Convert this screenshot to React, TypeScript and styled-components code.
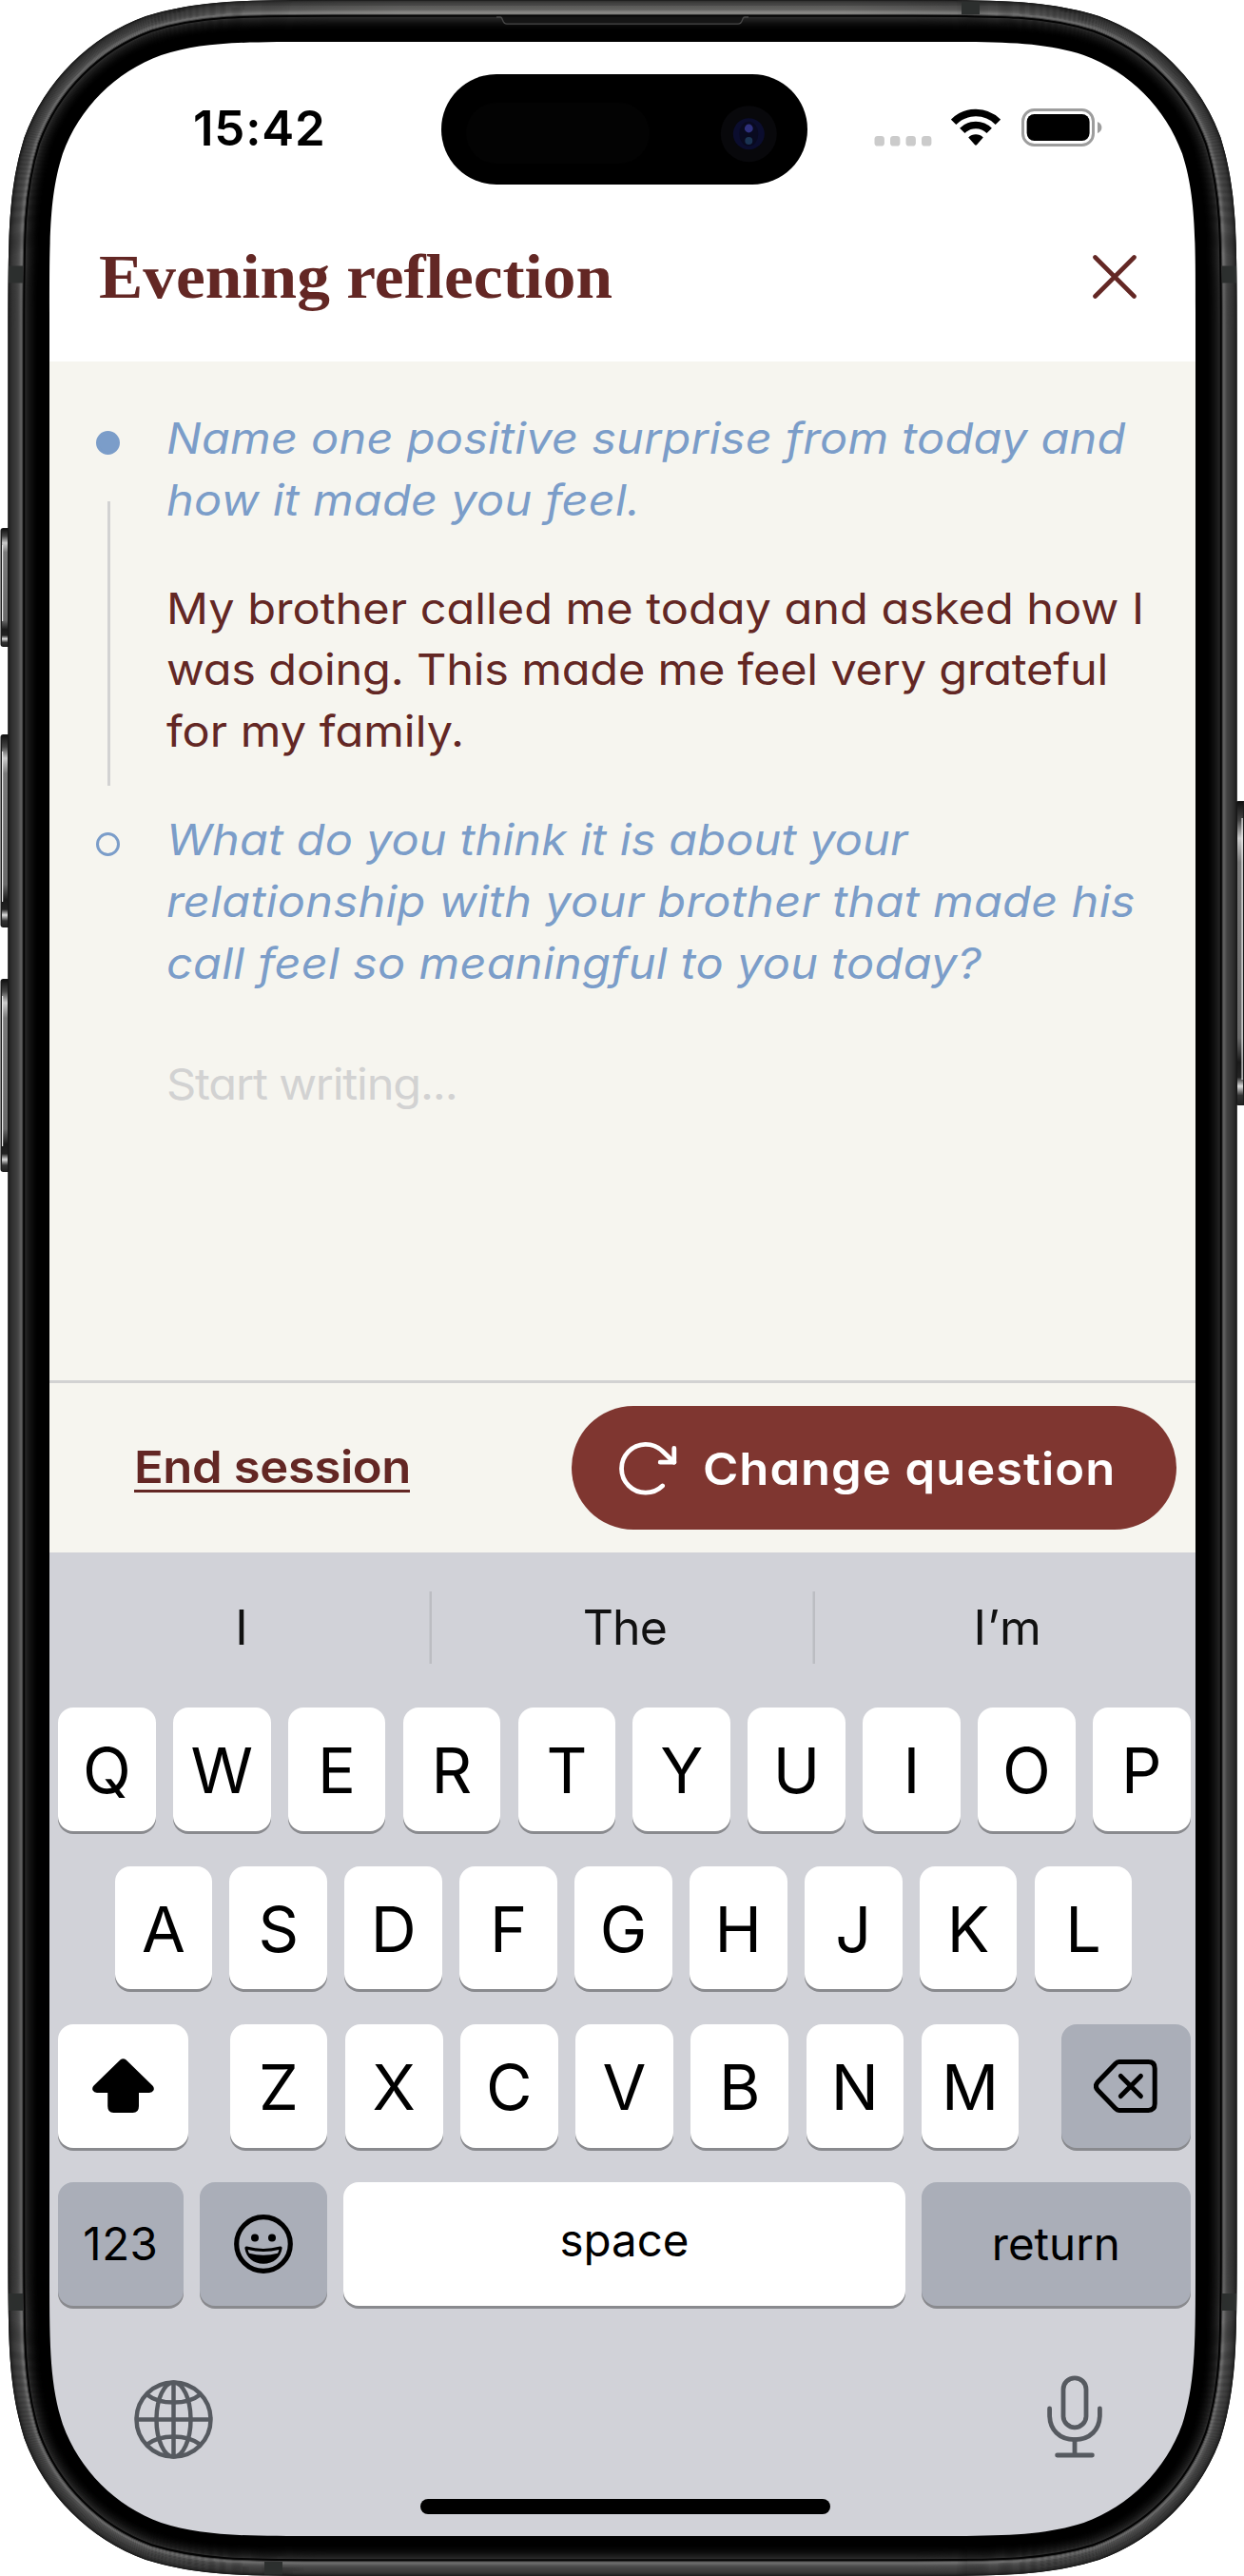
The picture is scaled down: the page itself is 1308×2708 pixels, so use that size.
import React from 'react';
import styled, { createGlobalStyle } from 'styled-components';

const color = {
  maroon: '#632724',
  button: '#7f3630',
  blue: '#7b9dc9',
  cream: '#f6f5ef',
  rule: '#d2d2d2',
  keyboard: '#d1d2d8',
  keyGrey: '#aaaeb8',
  glyph: '#565a60',
};

const GlobalStyle = createGlobalStyle`
  *, *::before, *::after { box-sizing: border-box; }
  body { margin: 0; background: #fff; }
  button { border: 0; padding: 0; background: none; font: inherit; color: inherit; }
  svg { display: block; flex: none; }
`;

const Device = styled.main`
  position: relative;
  width: 1308px;
  height: 2708px;
  padding: 44px 51px 42px 52px;
  overflow: hidden;
  font-family: Inter, 'Liberation Sans', sans-serif;
`;

const Screen = styled.div`
  display: flex;
  flex-direction: column;
  height: 2622px;
  border-radius: 150px;
  background: #fff;
  overflow: hidden;
`;

const FrameArt = styled.svg`
  position: absolute;
  inset: 0;
  pointer-events: none;
`;

const StatusBar = styled.div`
  display: grid;
  grid-template-columns: 412px 385px 1fr;
  height: 150px;
  padding-top: 34px;
`;

const Clock = styled.time`
  display: flex;
  align-items: center;
  padding: 0 0 3px 151px;
  font-size: 51px;
  font-weight: 600;
  letter-spacing: 0.8px;
`;

const Indicators = styled.div`
  display: flex;
  align-items: center;
  padding: 0 0 5px 70px;
`;

const WifiSlot = styled.div`
  margin: 0 22px 0 20px;
`;

const TitleBar = styled.header`
  display: flex;
  align-items: center;
  justify-content: space-between;
  height: 186px;
  padding: 7px 62px 0 52px;
`;

const Title = styled.h1`
  margin: 0;
  color: ${color.maroon};
  font: bold 66px/80px 'Liberation Serif', serif;
  white-space: nowrap;
  transform: scaleX(1.051);
  transform-origin: left;
`;

const Journal = styled.section`
  flex: 1;
  padding: 49px 0 0 49px;
  background: ${color.cream};
`;

const Entry = styled.article`
  display: flex;
  gap: 49px;
`;

const Marker = styled.div`
  display: flex;
  flex-direction: column;
  align-items: center;
  gap: 49px;
  width: 25px;
  padding-top: 24px;
`;

const Dot = styled.span<{ $filled?: boolean }>`
  flex: none;
  width: 25px;
  height: 25px;
  border: 3px solid ${color.blue};
  border-radius: 50%;
  background: ${p => (p.$filled ? color.blue : 'transparent')};
`;

const Thread = styled.span`
  flex: 1;
  width: 3px;
  margin: 0 0 25px 1px;
  background: ${color.rule};
`;

const EntryText = styled.div`
  display: flex;
  flex-direction: column;
  gap: 49px;
  padding-bottom: 49px;
  font-size: 45.5px;
  line-height: 64.8px;
  font-feature-settings: 'cv11' 1;
  white-space: nowrap;
`;

const Question = styled.p`
  margin: 0;
  color: ${color.blue};
  font-style: italic;
`;

const Answer = styled.p`
  margin: 0;
  color: ${color.maroon};
`;

const Placeholder = styled.p`
  margin: 13.5px 0 0;
  color: ${color.rule};
`;

/* The wide cut of the text face. */
const Line = styled.span<{ $track: number }>`
  display: block;
  letter-spacing: ${p => p.$track}px;
  transform: scaleX(1.07);
  transform-origin: left;
`;

const ActionBar = styled.footer`
  display: flex;
  align-items: center;
  justify-content: space-between;
  height: 181px;
  padding: 0 20px 0 89px;
  border-top: 3px solid ${color.rule};
  background: ${color.cream};
  font-size: 47px;
  font-weight: 600;
  font-feature-settings: 'cv11' 1;
  white-space: nowrap;
`;

const ButtonLabel = styled.span<{ $track: number }>`
  display: block;
  letter-spacing: ${p => p.$track}px;
  transform: scaleX(1.08);
  transform-origin: left;
`;

const EndSession = styled.button`
  width: 290px;
  border-bottom: 3px solid ${color.maroon};
  color: ${color.maroon};
  line-height: 48px;
  text-align: left;
`;

const ChangeQuestion = styled.button`
  display: flex;
  align-items: center;
  gap: 27px;
  width: 636px;
  height: 130px;
  padding-left: 47px;
  border-radius: 65px;
  background: ${color.button};
  color: #fff;
`;

const Keyboard = styled.section`
  display: flex;
  flex-direction: column;
  height: 1034px;
  padding: 0 5.4px 0 9px;
  background: ${color.keyboard};
  color: #000;
`;

const Suggestions = styled.div`
  display: flex;
  align-items: center;
  height: 163.3px;
  margin: 0 -8.5px 0 -9.5px;
  padding-bottom: 5px;
  color: #111;
  font-size: 50px;
`;

const Suggestion = styled.span<{ $track?: number }>`
  flex: 1;
  padding-left: 2px;
  line-height: 76px;
  letter-spacing: ${p => p.$track ?? 0}px;
  text-align: center;

  & + & { box-shadow: -2.5px 0 0 #bcbdc2; }
`;

const Keys = styled.div`
  display: flex;
  flex-direction: column;
  gap: 36.8px;
`;

const KeyRow = styled.div<{ $indent?: number; $spread?: boolean }>`
  display: flex;
  justify-content: ${p => (p.$spread ? 'space-between' : 'flex-start')};
  gap: ${p => (p.$spread ? 0 : 18.2)}px;
  padding-left: ${p => p.$indent ?? 0}px;
`;

const LetterGroup = styled.div`
  display: flex;
  gap: 18.5px;
`;

const FunctionRow = styled.div`
  display: grid;
  grid-template-columns: 131.8px 133.4px 1fr 282.5px;
  gap: 17.6px;
`;

const Key = styled.button<{ $w?: number; $grey?: boolean }>`
  display: flex;
  align-items: center;
  justify-content: center;
  width: ${p => (p.$w ? `${p.$w}px` : 'auto')};
  height: 129.6px;
  border-radius: 16px;
  background: ${p => (p.$grey ? color.keyGrey : '#fff')};
  box-shadow: 0 3px 0 #898a8e;
`;

const LetterKey = styled(Key)`
  padding-top: 2.6px;
  font-size: 66.5px;
`;

const WordKey = styled(Key)<{ $lift: number; $track?: number }>`
  padding-bottom: ${p => p.$lift}px;
  font-size: 47.5px;
  letter-spacing: ${p => p.$track ?? 0}px;
`;

const BottomBar = styled.div`
  display: flex;
  align-items: flex-start;
  justify-content: space-between;
  height: 88px;
  margin-top: 73px;
  padding: 0 93px 0 80px;
`;

const GlobeSlot = styled.div`
  margin-top: 5px;
`;

const HomeIndicator = styled.div`
  width: 431px;
  height: 16px;
  margin: 42px 0 0 380.5px;
  border-radius: 8px;
  background: #000;
`;

const Island = styled.svg`
  width: 385px;
  height: 116px;
`;

const IslandArt = () => (
  <Island viewBox="0 0 385 116">
    <rect width="385" height="116" rx="58" fill="#000" />
    <rect x="26" y="30" width="193" height="64" rx="32" fill="#030303" />
    <circle cx="323.3" cy="62.7" r="29.5" fill="#08080b" />
    <circle cx="323.3" cy="62.7" r="16.5" fill="#0b0d2e" />
    <ellipse cx="323.3" cy="62.7" rx="10" ry="13" fill="#090a20" />
    <circle cx="323.3" cy="57" r="4.4" fill="#2e307c" />
    <circle cx="323.3" cy="70" r="4" fill="#1a3352" />
  </Island>
);

const SignalDots = () => (
  <svg width="61" height="40" viewBox="0 0 61 40" fill="#cbcbcb">
    {[0, 16.5, 33, 49.5].map(x => (
      <rect key={x} x={x + 0.5} y="29" width="10.4" height="10.6" rx="3.4" />
    ))}
  </svg>
);

const Wifi = () => (
  <svg width="52" height="40" viewBox="0 0 52 40">
    <g fill="none" stroke="#000" strokeWidth="7.6">
      <path d="M2.6 14.3 A33 33 0 0 1 49.4 14.3" />
      <path d="M11.8 23.4 A20 20 0 0 1 40.2 23.4" />
    </g>
    <path d="M18.2 30.4 A11.2 11.2 0 0 1 33.8 30.4 L27.2 38 Q26 39.4 24.8 38 Z" fill="#000" />
  </svg>
);

const Battery = () => (
  <svg width="85" height="40" viewBox="0 0 85 40">
    <rect x="1.5" y="1.5" width="74" height="37" rx="12" fill="none" stroke="#9d9d9d" strokeWidth="3" />
    <rect x="5.6" y="6" width="66" height="28" rx="8" fill="#000" />
    <path d="M80 14 Q84.4 16 84.4 20 Q84.4 24 80 26 Z" fill="#9d9d9d" />
  </svg>
);

const CloseIcon = () => (
  <svg width="46" height="46" viewBox="0 0 46 46" stroke={color.maroon} strokeWidth="4.6" strokeLinecap="round">
    <path d="M2.5 2.5 L43.5 43.5 M43.5 2.5 L2.5 43.5" />
  </svg>
);

const ReloadIcon = () => (
  <svg width="64" height="62" viewBox="0 0 64 62" fill="none" stroke="#fff" strokeWidth="4.8" strokeLinecap="round" strokeLinejoin="round">
    <path d="M48.6 50 A25.4 25.4 0 1 1 48.3 13.2 L60.8 25.2" />
    <path d="M60.8 10.4 V25.2 H46.2" />
  </svg>
);

const ShiftIcon = () => (
  <svg width="65" height="57" viewBox="0 0 65 57">
    <path d="M29.3 1.6 Q32.5 -1 35.7 1.6 L63.4 28.6 Q65.6 31 64.4 33.6 Q63.2 36 60 36 H49 V50 Q49 57 42.6 57 H22.4 Q16.2 57 16.2 50 V36 H5 Q1.8 36 0.6 33.6 Q-0.6 31 1.6 28.6 Z" />
  </svg>
);

const BackspaceIcon = () => (
  <svg width="67" height="56" viewBox="0 0 67 56" fill="none" stroke="#000" strokeWidth="5" strokeLinecap="round" strokeLinejoin="round">
    <path d="M26.6 2.6 H57.4 Q64.2 2.6 64.2 9.4 V46.6 Q64.2 53.4 57.4 53.4 H26.6 Q24.6 53.4 22.8 51.6 L4.2 32.2 Q0.6 28 4.2 23.8 L22.8 4.4 Q24.6 2.6 26.6 2.6 Z" />
    <path d="M28.4 17.4 L49.4 38.6 M49.4 17.4 L28.4 38.6" />
  </svg>
);

const EmojiIcon = () => (
  <svg width="62" height="62" viewBox="0 0 62 62">
    <circle cx="31" cy="31" r="28.3" fill="none" stroke="#000" strokeWidth="5.2" />
    <circle cx="22" cy="24.4" r="4" />
    <circle cx="40" cy="24.4" r="4" />
    <path d="M13.6 33.6 Q31 38.4 48.4 33.6 Q50.8 33.2 50.6 35.6 C49 45.4 41.6 51.8 31 51.8 C20.4 51.8 13 45.4 11.4 35.6 Q11.2 33.2 13.6 33.6 Z" />
    <path d="M14.6 37 Q31 41 47.4 37 Q47 39 46 40.8 Q31 44.6 16 40.8 Q15 39 14.6 37 Z" fill={color.keyGrey} />
  </svg>
);

const GlobeIcon = () => (
  <svg width="83" height="83" viewBox="0 0 83 83" fill="none" stroke={color.glyph} strokeWidth="4.5">
    <circle cx="41.5" cy="41.5" r="39" />
    <ellipse cx="41.5" cy="41.5" rx="18" ry="39" />
    <path d="M41.5 2.5 V80.5 M2.5 41.5 H80.5" />
    <path d="M13.4 15.2 Q24 23.6 41.5 23.6 Q59 23.6 69.6 15.2" />
    <path d="M13.4 67.8 Q24 59.4 41.5 59.4 Q59 59.4 69.6 67.8" />
  </svg>
);

const MicIcon = () => (
  <svg width="58" height="88" viewBox="0 0 58 88" fill="none" stroke={color.glyph} strokeWidth="4.8" strokeLinecap="round">
    <rect x="17" y="2.8" width="24" height="52" rx="12" />
    <path d="M2.6 35 V41.4 C2.6 57.4 13 67.6 29 67.6 C45 67.6 55.4 57.4 55.4 41.4 V35" />
    <path d="M29 67.6 V84 M10.6 84 H47.4" />
  </svg>
);

/* Rounded rectangle whose corners ease into the straight edges. */
function smoothBox(x0: number, y0: number, x1: number, y1: number, r: number) {
  const a = 1.52866498 * r, b = 1.08849296 * r, c = 0.86840694 * r, d = 0.63149379 * r;
  const e = 0.07491139 * r, f = 0.37282383 * r, g = 0.16905956 * r;
  return [
    `M${x0 + a} ${y0}`,
    `L${x1 - a} ${y0}`,
    `C${x1 - b} ${y0} ${x1 - c} ${y0} ${x1 - d} ${y0 + e}`,
    `C${x1 - f} ${y0 + g} ${x1 - g} ${y0 + f} ${x1 - e} ${y0 + d}`,
    `C${x1} ${y0 + c} ${x1} ${y0 + b} ${x1} ${y0 + a}`,
    `L${x1} ${y1 - a}`,
    `C${x1} ${y1 - b} ${x1} ${y1 - c} ${x1 - e} ${y1 - d}`,
    `C${x1 - g} ${y1 - f} ${x1 - f} ${y1 - g} ${x1 - d} ${y1 - e}`,
    `C${x1 - c} ${y1} ${x1 - b} ${y1} ${x1 - a} ${y1}`,
    `L${x0 + a} ${y1}`,
    `C${x0 + b} ${y1} ${x0 + c} ${y1} ${x0 + d} ${y1 - e}`,
    `C${x0 + f} ${y1 - g} ${x0 + g} ${y1 - f} ${x0 + e} ${y1 - d}`,
    `C${x0} ${y1 - c} ${x0} ${y1 - b} ${x0} ${y1 - a}`,
    `L${x0} ${y0 + a}`,
    `C${x0} ${y0 + b} ${x0} ${y0 + c} ${x0 + e} ${y0 + d}`,
    `C${x0 + g} ${y0 + f} ${x0 + f} ${y0 + g} ${x0 + d} ${y0 + e}`,
    `C${x0 + c} ${y0} ${x0 + b} ${y0} ${x0 + a} ${y0}Z`,
  ].join(' ');
}

const bodyOutline = (inset: number) =>
  smoothBox(8.5 + inset, inset, 1300.5 - inset, 2708 - inset, 229 - inset);

/* Grey level of the metal band and bezel edge, one step per pixel inward. */
const bandLevels = [
  30, 38, 46, 52, 56, 60, 63, 66, 69, 73, 78, 86, 98, 108, 106, 66, 6, 4,
  44, 38, 32, 28, 24, 20, 17, 14, 11, 8, 6, 4, 3, 1,
];

const sideButtons = [
  { x: 0.5, y: 555, h: 125, right: false },
  { x: 0.5, y: 772, h: 203, right: false },
  { x: 0.5, y: 1029, h: 203, right: false },
  { x: 1299, y: 842, h: 320, right: true },
];

const PhoneFrame = () => (
  <FrameArt width="1308" height="2708" viewBox="0 0 1308 2708">
    <defs>
      <linearGradient id="btn" x1="0" x2="0" y1="0" y2="1">
        <stop offset="0" stopColor="#111" />
        <stop offset="0.06" stopColor="#444" />
        <stop offset="0.12" stopColor="#ccc" />
        <stop offset="0.2" stopColor="#7a7a7a" />
        <stop offset="0.78" stopColor="#6a6a6a" />
        <stop offset="0.86" stopColor="#1a1a1a" />
        <stop offset="0.91" stopColor="#222" />
        <stop offset="0.94" stopColor="#ddd" />
        <stop offset="0.97" stopColor="#333" />
        <stop offset="1" stopColor="#222" />
      </linearGradient>
      <linearGradient id="sheen" x1="0" x2="1" y1="0" y2="0">
        <stop offset="0" stopColor="#fffbf0" stopOpacity="0" />
        <stop offset="0.25" stopColor="#fffbf0" stopOpacity="1" />
        <stop offset="0.75" stopColor="#fffbf0" stopOpacity="1" />
        <stop offset="1" stopColor="#fffbf0" stopOpacity="0" />
      </linearGradient>
    </defs>
    {sideButtons.map(b => (
      <g key={b.y}>
        <rect x={b.x} y={b.y} width="12" height={b.h} rx="3" fill="#1b1b1b" />
        <rect x={b.right ? b.x + 2 : b.x + 1.5} y={b.y + 1} width="6" height={b.h - 2} fill="url(#btn)" />
        <rect x={b.right ? b.x + 6.5 : b.x + 1.5} y={b.y + 18} width="1.2" height={b.h - 45} fill="#ececec" />
      </g>
    ))}
    <path d={`${bodyOutline(0)} ${smoothBox(52, 44, 1257, 2666, 186)}`} fill="#000" fillRule="evenodd" />
    {bandLevels.map((v, i) => (
      <path key={i} d={bodyOutline(i + 0.5)} fill="none" stroke={`rgb(${v},${v},${v})`} strokeWidth="1.3" />
    ))}
    <rect x="190" y="1" width="930" height="5" fill="url(#sheen)" opacity="0.06" />
    <rect x="190" y="6" width="930" height="5" fill="url(#sheen)" opacity="0.14" />
    <rect x="190" y="11" width="930" height="4" fill="url(#sheen)" opacity="0.2" />
    <path d="M522 18 H526 Q527.5 18 528.5 21 Q529.8 25.2 533 25.2 H776 Q779.2 25.2 780.5 21 Q781.5 18 783 18 H787" fill="#151515" stroke="#484848" strokeWidth="1.3" />
    <g fill="#2c2f2e">
      <rect x="1011" y="1.5" width="19" height="13.5" />
      <rect x="278" y="2693" width="19" height="13.5" />
      <rect x="9" y="279.5" width="15" height="18" />
      <rect x="1285" y="279.5" width="15" height="18" />
      <rect x="9" y="2411" width="15" height="18" />
      <rect x="1285" y="2411" width="15" height="18" />
    </g>
  </FrameArt>
);

const letters = (row: string) => row.split('').map(l => <LetterKey key={l} $w={102.7}>{l}</LetterKey>);

export default function App() {
  return (
    <Device>
      <GlobalStyle />
      <Screen>
        <StatusBar>
          <Clock>15:42</Clock>
          <IslandArt />
          <Indicators>
            <SignalDots />
            <WifiSlot><Wifi /></WifiSlot>
            <Battery />
          </Indicators>
        </StatusBar>
        <TitleBar>
          <Title>Evening reflection</Title>
          <button aria-label="Close"><CloseIcon /></button>
        </TitleBar>
        <Journal>
          <Entry>
            <Marker><Dot $filled /><Thread /></Marker>
            <EntryText>
              <Question>
                <Line $track={0.21}>Name one positive surprise from today and</Line>
                <Line $track={0.24}>how it made you feel.</Line>
              </Question>
              <Answer>
                <Line $track={-0.02}>My brother called me today and asked how I</Line>
                <Line $track={-0.2}>was doing. This made me feel very grateful</Line>
                <Line $track={0}>for my family.</Line>
              </Answer>
            </EntryText>
          </Entry>
          <Entry>
            <Marker><Dot /></Marker>
            <EntryText>
              <Question>
                <Line $track={0.1}>What do you think it is about your</Line>
                <Line $track={0.28}>relationship with your brother that made his</Line>
                <Line $track={0.26}>call feel so meaningful to you today?</Line>
              </Question>
              <Placeholder><Line $track={-1.1}>Start writing...</Line></Placeholder>
            </EntryText>
          </Entry>
        </Journal>
        <ActionBar>
          <EndSession><ButtonLabel $track={-0.35}>End session</ButtonLabel></EndSession>
          <ChangeQuestion><ReloadIcon /><ButtonLabel $track={0.9}>Change question</ButtonLabel></ChangeQuestion>
        </ActionBar>
        <Keyboard>
          <Suggestions>
            <Suggestion>I</Suggestion>
            <Suggestion $track={-1}>The</Suggestion>
            <Suggestion $track={1}>I’m</Suggestion>
          </Suggestions>
          <Keys>
            <KeyRow>{letters('QWERTYUIOP')}</KeyRow>
            <KeyRow $indent={59.6}>{letters('ASDFGHJKL')}</KeyRow>
            <KeyRow $spread>
              <Key $w={136.5} aria-label="shift"><ShiftIcon /></Key>
              <LetterGroup>{letters('ZXCVBNM')}</LetterGroup>
              <Key $w={136} $grey aria-label="delete"><BackspaceIcon /></Key>
            </KeyRow>
            <FunctionRow>
              <WordKey $grey $lift={1} $track={0.5}>123</WordKey>
              <Key $grey aria-label="emoji"><EmojiIcon /></Key>
              <WordKey $lift={9}>space</WordKey>
              <WordKey $grey $lift={1}>return</WordKey>
            </FunctionRow>
          </Keys>
          <BottomBar>
            <GlobeSlot><GlobeIcon /></GlobeSlot>
            <MicIcon />
          </BottomBar>
          <HomeIndicator />
        </Keyboard>
      </Screen>
      <PhoneFrame />
    </Device>
  );
}
